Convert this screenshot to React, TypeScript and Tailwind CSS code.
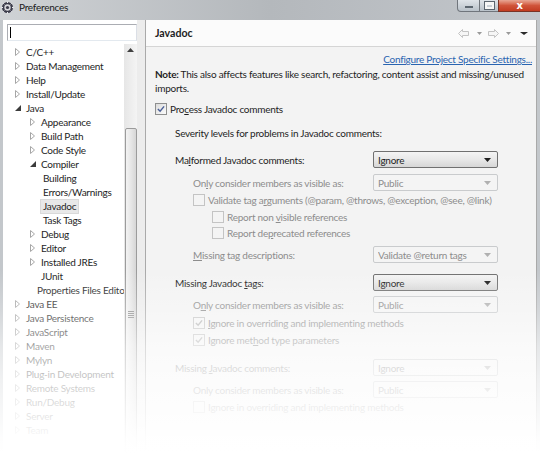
import React from 'react';

type Node = { label: string; level: 0 | 1 | 2; arrow?: 'c' | 'e'; selected?: boolean };

const TREE: Node[] = [
  { label: 'C/C++', level: 0, arrow: 'c' },
  { label: 'Data Management', level: 0, arrow: 'c' },
  { label: 'Help', level: 0, arrow: 'c' },
  { label: 'Install/Update', level: 0, arrow: 'c' },
  { label: 'Java', level: 0, arrow: 'e' },
  { label: 'Appearance', level: 1, arrow: 'c' },
  { label: 'Build Path', level: 1, arrow: 'c' },
  { label: 'Code Style', level: 1, arrow: 'c' },
  { label: 'Compiler', level: 1, arrow: 'e' },
  { label: 'Building', level: 2 },
  { label: 'Errors/Warnings', level: 2 },
  { label: 'Javadoc', level: 2, selected: true },
  { label: 'Task Tags', level: 2 },
  { label: 'Debug', level: 1, arrow: 'c' },
  { label: 'Editor', level: 1, arrow: 'c' },
  { label: 'Installed JREs', level: 1, arrow: 'c' },
  { label: 'JUnit', level: 1 },
  { label: 'Properties Files Editor', level: 1 },
  { label: 'Java EE', level: 0, arrow: 'c' },
  { label: 'Java Persistence', level: 0, arrow: 'c' },
  { label: 'JavaScript', level: 0, arrow: 'c' },
  { label: 'Maven', level: 0, arrow: 'c' },
  { label: 'Mylyn', level: 0, arrow: 'c' },
  { label: 'Plug-in Development', level: 0, arrow: 'c' },
  { label: 'Remote Systems', level: 0, arrow: 'c' },
  { label: 'Run/Debug', level: 0, arrow: 'c' },
  { label: 'Server', level: 0, arrow: 'c' },
  { label: 'Team', level: 0, arrow: 'c' },
];

const INDENT = ['pl-[10px]', 'pl-[25px]', 'pl-[40px]'];

const TreeArrow = ({ kind }: { kind?: 'c' | 'e' }) => (
  <span className="w-[9px] h-[14px] flex items-center justify-center shrink-0">
    {kind === 'c' && (
      <svg width="5" height="8" viewBox="0 0 5 8">
        <path d="M0.5 0.5 L4.5 4 L0.5 7.5 Z" fill="none" stroke="#a6a6a6" strokeWidth="1" />
      </svg>
    )}
    {kind === 'e' && (
      <svg width="6" height="6" viewBox="0 0 6 6">
        <path d="M6 0 L6 6 L0 6 Z" fill="#3c3c3c" />
      </svg>
    )}
  </span>
);

const Check = ({ checked, disabled }: { checked?: boolean; disabled?: boolean }) => (
  <span
    className={`w-[12px] h-[12px] shrink-0 border flex items-center justify-center ${
      disabled ? 'border-[#c4c4c4] bg-[#f4f4f4]' : 'border-[#8e8f8f] bg-gradient-to-br from-[#dcdcdc] to-[#fbfbfb]'
    }`}
  >
    {checked && (
      <svg width="8" height="8" viewBox="0 0 9 9">
        <path d="M1 4.5 L3.5 7 L8 1.5" fill="none" stroke={disabled ? '#b4b4b4' : '#4a5f97'} strokeWidth="1.6" />
      </svg>
    )}
  </span>
);

const Combo = ({ value, disabled }: { value: string; disabled?: boolean }) => (
  <div
    className={`w-[125px] h-[17px] rounded-[2px] border flex items-center pl-[4px] pr-[6px] ${
      disabled
        ? 'border-[#c9cbcd] bg-[#f4f4f4] text-[#8d8d8d]'
        : 'border-[#707070] bg-gradient-to-b from-[#f4f4f4] via-[#e8e8e8] to-[#d6d6d6] text-[#1e1e1e]'
    }`}
  >
    <span className="flex-1 truncate">{value}</span>
    <svg width="7" height="4" viewBox="0 0 7 4">
      <path d="M0 0 L7 0 L3.5 4 Z" fill={disabled ? '#b0b0b0' : '#1e1e1e'} />
    </svg>
  </div>
);

const Row = ({ label, indent, value, disabled, className = '' }: { label: React.ReactNode; indent: 1 | 2; value: string; disabled?: boolean; className?: string }) => (
  <div className={`flex items-center h-[17px] ${className}`}>
    <div className={`${indent === 1 ? 'w-[218px] pl-[20px]' : 'w-[218px] pl-[38px]'} shrink-0 whitespace-nowrap ${disabled ? 'text-[#8d8d8d]' : ''}`}>{label}</div>
    <Combo value={value} disabled={disabled} />
  </div>
);

const CheckRow = ({ label, indent, checked, disabled, className = '' }: { label: React.ReactNode; indent: 1 | 2; checked?: boolean; disabled?: boolean; className?: string }) => (
  <div className={`flex items-center gap-[3px] h-[14px] whitespace-nowrap ${indent === 1 ? 'pl-[38px]' : 'pl-[57px]'} ${className}`}>
    <Check checked={checked} disabled={disabled} />
    <span className={disabled ? 'text-[#8d8d8d]' : ''}>{label}</span>
  </div>
);

const EclipseIcon = () => (
  <svg width="13" height="13" viewBox="0 0 13 13">
    <circle cx="6.5" cy="6.5" r="5.5" fill="#3b3b4a" />
    <circle cx="6.5" cy="6.5" r="3.2" fill="#d7d7dc" />
    <circle cx="6.5" cy="6.5" r="1.6" fill="#3b3b4a" />
    <path d="M6.5 0.5 V2 M6.5 11 V12.5 M0.5 6.5 H2 M11 6.5 H12.5 M2.3 2.3 L3.3 3.3 M9.7 9.7 L10.7 10.7 M2.3 10.7 L3.3 9.7 M9.7 3.3 L10.7 2.3" stroke="#ececf0" strokeWidth="1" />
  </svg>
);

const NavArrow = ({ dir }: { dir: 'l' | 'r' }) => (
  <svg width="11" height="9" viewBox="0 0 11 9">
    <path
      d={dir === 'l' ? 'M0.5 4.5 L4.5 0.5 V2.5 H10.5 V6.5 H4.5 V8.5 Z' : 'M10.5 4.5 L6.5 0.5 V2.5 H0.5 V6.5 H6.5 V8.5 Z'}
      fill="#f6f6f6"
      stroke="#c3c3c3"
    />
  </svg>
);

const SmallDrop = ({ color = '#9a9a9a', w = 5 }: { color?: string; w?: number }) => (
  <svg width={w} height="3" viewBox={`0 0 ${w} 3`}>
    <path d={`M0 0 L${w} 0 L${w / 2} 3 Z`} fill={color} />
  </svg>
);

export default function App() {
  return (
    <div className="relative w-[540px] h-[453px] overflow-hidden bg-[#c3c7cb] text-[10px] tracking-[-0.25px] leading-[14px] text-[#1e1e1e] font-['Lato','Open_Sans',sans-serif]">
      {/* Title bar */}
      <div className="h-[20px] flex items-start bg-gradient-to-r from-[#cfd2d5] via-[#b4b8bc] to-[#c2c6cb]">
        <div className="flex items-center gap-[5px] pl-[1px] pt-[1px]">
          <EclipseIcon />
          <span className="text-[10px] leading-[13px] text-[#1a1a1a]">Preferences</span>
        </div>
        <div className="ml-auto flex h-[12px]">
          <div className="w-[23px] rounded-bl-[4px] border border-t-0 border-[#70757c] bg-gradient-to-b from-[#dfe4e9] to-[#b9c1c9] flex items-end justify-center pb-[3px]">
            <div className="w-[8px] h-[2px] bg-[#f3f3f3] border border-[#5c6670]" />
          </div>
          <div className="w-[18px] border-b border-[#70757c] bg-gradient-to-b from-[#dfe4e9] to-[#b9c1c9] flex items-center justify-center">
            <div className="w-[9px] h-[7px] border-[2px] border-t-[3px] border-[#f6f6f6] outline outline-1 outline-[#5c6670]" />
          </div>
          <div className="w-[42px] border-b border-l border-[#7a3326] bg-gradient-to-b from-[#e7a694] via-[#d0543a] to-[#c23b20] flex items-center justify-center">
            <span className="text-[10px] leading-[10px] font-bold text-white font-['DejaVu_Sans',sans-serif]">x</span>
          </div>
        </div>
      </div>

      {/* Window body */}
      <div className="flex h-[433px] mx-[3px] bg-[#f0f0f0]">
        {/* Left pane */}
        <div className="w-[134px] bg-white flex flex-col shrink-0">
          <div className="mt-[4px] ml-[4px] h-[17px] w-[130px] border border-[#abadb3] border-r-[#dbdfe6] border-b-[#e3e9ef] bg-white flex items-center pl-[2px]">
            <div className="w-[1px] h-[11px] bg-black" />
          </div>
          <div className="flex flex-1 mt-[3px] overflow-hidden">
            <div className="flex-1 overflow-hidden pt-[1px]">
              {TREE.map((n) => (
                <div key={n.label} className={`flex items-center h-[14px] whitespace-nowrap ${INDENT[n.level]}`}>
                  {n.level < 2 && <TreeArrow kind={n.arrow} />}
                  {n.level < 2 && <span className="w-[4px]" />}
                  <span className={n.selected ? 'bg-[#e8e8e8] border border-[#d9d9d9] px-[2px] -ml-[3px] h-[15px] leading-[13px]' : ''}>{n.label}</span>
                </div>
              ))}
            </div>
            {/* Scrollbar */}
            <div className="w-[13px] bg-gradient-to-r from-[#e6e6e6] to-[#f4f4f4] flex flex-col items-center">
              <div className="h-[12px] flex items-center justify-center">
                <svg width="7" height="4" viewBox="0 0 7 4">
                  <path d="M0 4 L7 4 L3.5 0 Z" fill="#404040" />
                </svg>
              </div>
              <div className="mt-[72px] w-[12px] flex-1 rounded-[2px] border border-[#9b9b9b] bg-gradient-to-r from-[#f3f3f3] via-[#e6e6e6] to-[#d6d6d6] flex flex-col items-center pt-[182px] gap-[1px]">
                <div className="w-[6px] h-[1px] bg-[#8a8a8a]" />
                <div className="w-[6px] h-[1px] bg-[#8a8a8a]" />
                <div className="w-[6px] h-[1px] bg-[#8a8a8a]" />
                <div className="w-[6px] h-[1px] bg-[#8a8a8a]" />
              </div>
            </div>
          </div>
        </div>

        {/* Sash */}
        <div className="w-[8px] shrink-0 bg-[#ececec]" />

        {/* Right pane */}
        <div className="flex-1 border-l border-r border-[#a9a9a9] flex flex-col bg-[#f3f3f3]">
          <div className="h-[27px] shrink-0 bg-[#fbfbfb] border-b border-[#d5d5d5] flex items-center pl-[9px] pr-[8px]">
            <span className="font-bold text-[10.6px] tracking-normal">Javadoc</span>
            <div className="ml-auto flex items-center">
              <NavArrow dir="l" />
              <span className="ml-[8px] flex"><SmallDrop /></span>
              <span className="ml-[6px] flex"><NavArrow dir="r" /></span>
              <span className="ml-[7px] flex"><SmallDrop /></span>
              <span className="ml-[9px] flex"><SmallDrop color="#2a2a2a" w={8} /></span>
            </div>
          </div>

          <div className="flex flex-col pl-[9px] pr-[4px]">
            <div className="mt-[5px] h-[14px] flex justify-end">
              <span className="text-[#2a64b0] underline">Configure Project Specific Settings...</span>
            </div>
            <p className="mt-[1px] whitespace-nowrap">
              <b>Note:</b> This also affects features like search, refactoring, content assist and missing/unused
              <br />
              imports.
            </p>
            <div className="mt-[7px] h-[14px] flex items-center gap-[3px]">
              <Check checked />
              <span>Pro<u>c</u>ess Javadoc comments</span>
            </div>
            <div className="mt-[10px] h-[14px] pl-[20px]">Severity levels for problems in Javadoc comments:</div>

            <Row className="mt-[11px]" indent={1} label={<>Ma<u>l</u>formed Javadoc comments:</>} value="Ignore" />
            <Row className="mt-[6px]" indent={2} disabled label={<>On<u>l</u>y consider members as visible as:</>} value="Public" />
            <CheckRow className="mt-[2px]" indent={1} disabled label={<>Validate tag a<u>r</u>guments (@param, @throws, @exception, @see, @link)</>} />
            <CheckRow className="mt-[3px]" indent={2} disabled label={<>Report non <u>v</u>isible references</>} />
            <CheckRow className="mt-[2px]" indent={2} disabled label={<>Report de<u>p</u>recated references</>} />
            <Row className="mt-[6px]" indent={2} disabled label={<><u>M</u>issing tag descriptions:</>} value="Validate @return tags" />

            <Row className="mt-[11px]" indent={1} label={<>Missing Javadoc <u>t</u>ags:</>} value="Ignore" />
            <Row className="mt-[5px]" indent={2} disabled label={<>O<u>n</u>ly consider members as visible as:</>} value="Public" />
            <CheckRow className="mt-[3px]" indent={1} checked disabled label={<><u>I</u>gnore in overriding and implementing methods</>} />
            <CheckRow className="mt-[3px]" indent={1} checked disabled label={<>Ignore met<u>h</u>od type parameters</>} />

            <Row className="mt-[12px]" indent={1} disabled label={<>Missing <u>J</u>avadoc comments:</>} value="Ignore" />
            <Row className="mt-[5px]" indent={2} disabled label={<>Only consider members as visible as:</>} value="Public" />
            <CheckRow className="mt-[2px]" indent={1} disabled label={<>Ignore in overriding and implementing methods</>} />
          </div>
        </div>
      </div>

      {/* Bottom fade */}
      <div className="pointer-events-none absolute left-0 right-0 top-[270px] bottom-0 bg-[linear-gradient(to_bottom,rgba(255,255,255,0)_0%,rgba(255,255,255,0.25)_20%,rgba(255,255,255,0.58)_42%,rgba(255,255,255,0.75)_60%,rgba(255,255,255,0.88)_80%,rgba(255,255,255,0.97)_92%,#ffffff_100%)]" />
    </div>
  );
}
